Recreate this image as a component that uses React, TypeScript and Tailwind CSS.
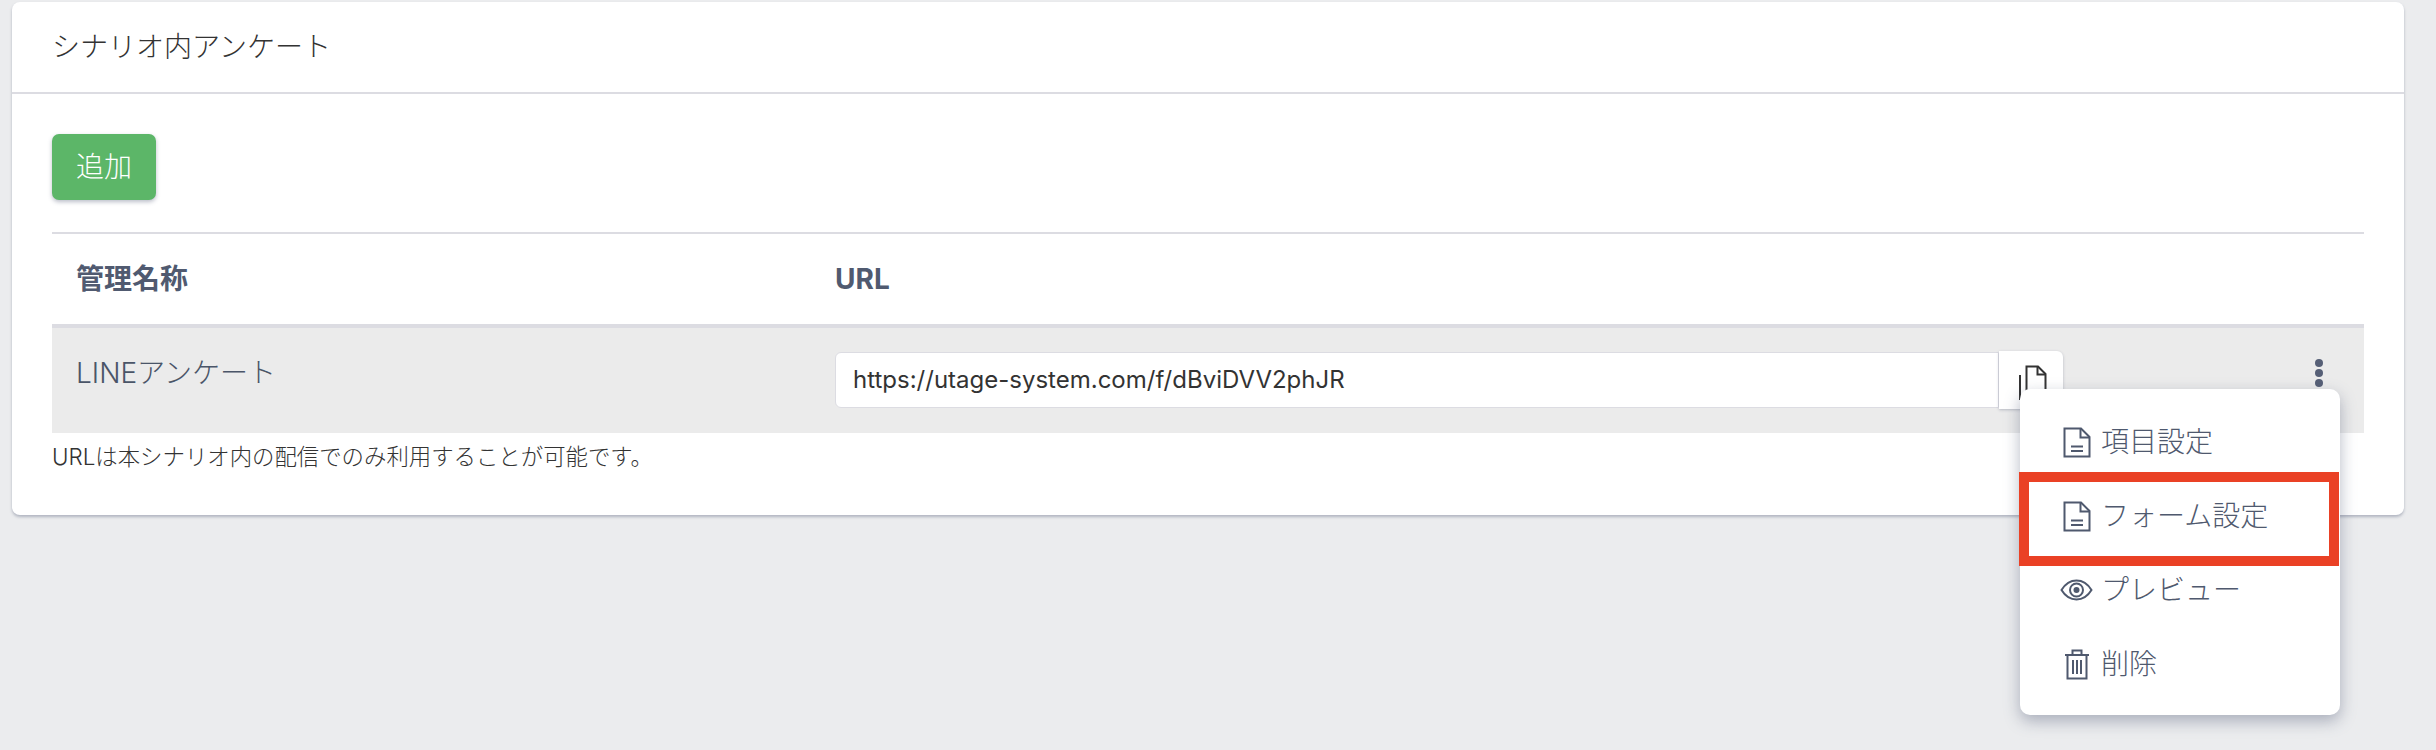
const FONT = 'font-[Inter,"Noto_Sans_CJK_JP",sans-serif]';

function FileIcon() {
  return (
    <svg width="28" height="31" viewBox="0 0 28 31" fill="none" stroke="currentColor" strokeWidth="2">
      <path d="M1.5 1.5H18L26.5 10V29.5H1.5Z" />
      <path d="M17.5 1.5V10.5H26.5" />
      <path d="M8 19.5H20M8 24H20" />
    </svg>
  );
}

function CopyIcon() {
  return (
    <svg width="30" height="36" viewBox="0 0 30 36" fill="none" stroke="#333" strokeWidth="2">
      <path d="M9.5 35V1.5H21L28.5 9V35" />
      <path d="M20.5 1.5V9.5H28.5" />
      <path d="M3 10V35" />
    </svg>
  );
}

function TrashIcon() {
  return (
    <svg width="26" height="31" viewBox="0 0 26 31" fill="none" stroke="currentColor" strokeWidth="2">
      <path d="M1 6H25" />
      <path d="M8.5 5.5V1.5H17.5V5.5" />
      <path d="M3.5 6.5V29.5H22.5V6.5" />
      <path d="M9 11V25M13 11V25M17 11V25" />
    </svg>
  );
}

function EyeIcon() {
  return (
    <svg width="33" height="22" viewBox="0 0 33 22" fill="none" stroke="currentColor" strokeWidth="2">
      <path d="M1.5 11C5.5 4.5 10.5 1.5 16.5 1.5S27.5 4.5 31.5 11C27.5 17.5 22.5 20.5 16.5 20.5S5.5 17.5 1.5 11Z" />
      <circle cx="16.5" cy="11" r="6.5" />
      <circle cx="16.5" cy="11" r="3" fill="currentColor" stroke="none" />
    </svg>
  );
}

const MENU = [
  { label: '項目設定', icon: <FileIcon /> },
  { label: 'フォーム設定', icon: <FileIcon /> },
  { label: 'プレビュー', icon: <EyeIcon /> },
  { label: '削除', icon: <TrashIcon /> },
];

export default function App() {
  return (
    <div className={`relative h-[750px] overflow-hidden bg-[#ebecee] pt-[2px] ${FONT}`}>
      <div className="ml-3 mr-8 h-[513px] rounded-[8px] bg-white shadow-[0_2px_3px_rgba(90,100,125,0.4)]">
        <div className="flex h-[92px] items-center border-b-2 border-[#dcdce2] px-[40px] text-[28px] font-light text-[#333]">
          シナリオ内アンケート
        </div>
        <div className="px-10 pt-10">
          <button className="h-[66px] w-[104px] rounded-[7px] bg-[#5cb668] text-[28px] font-light text-white shadow-[0_2px_4px_rgba(60,70,100,0.35)]">
            追加
          </button>
          <div className="mt-8 border-t-2 border-[#dcdce2]">
            <div className="flex h-[94px] items-center border-b-4 border-[#dcdce2] text-[28px] font-bold text-[#505a70]">
              <div className="w-[783px] pl-6">管理名称</div>
              <div>URL</div>
            </div>
            <div className="flex h-[105px] items-start bg-[#ebebeb]">
              <div className="w-[783px] pl-6 pt-[25px] text-[28px] leading-[40px] font-light text-[#4a5568]">
                LINEアンケート
              </div>
              <div className="flex pt-[24px]">
                <div className="flex h-[56px] w-[1164px] items-center rounded-l-[6px] border border-[#dcdce2] bg-white pl-[17px] text-[24px] text-[#333]">
                  https://utage-system.com/f/dBviDVV2phJR
                </div>
                <button className="-mt-[1px] flex h-[58px] w-[64px] justify-center rounded-r-[6px] bg-white pl-[2px] pt-[14px] shadow-[0_1px_3px_rgba(60,70,100,0.3)]">
                  <CopyIcon />
                </button>
              </div>
              <div className="ml-auto mr-[41px] flex flex-col gap-[2px] pt-[31px]">
                <span className="h-2 w-2 rounded-full bg-[#565f76]" />
                <span className="h-2 w-2 rounded-full bg-[#565f76]" />
                <span className="h-2 w-2 rounded-full bg-[#565f76]" />
              </div>
            </div>
            <p className="pt-[6px] text-[22.4px] leading-[36px] font-light text-[#333]">
              URLは本シナリオ内の配信でのみ利用することが可能です。
            </p>
          </div>
        </div>
      </div>

      <div className="absolute left-[2020px] top-[389px] w-[320px] rounded-[10px] bg-white pb-[14px] pt-[16px] shadow-[0_6px_16px_rgba(70,80,110,0.4)]">
        {MENU.map((item) => (
          <div key={item.label} className="flex h-[74px] items-center text-[28px] font-light text-[#4f596e]">
            <span className="ml-[40px] mr-[8px] flex w-[33px] justify-center">{item.icon}</span>
            <span>{item.label}</span>
          </div>
        ))}
      </div>
      <div className="absolute left-[2019px] top-[472px] h-[94px] w-[320px] border-[10px] border-[#ea4125]" />
    </div>
  );
}
